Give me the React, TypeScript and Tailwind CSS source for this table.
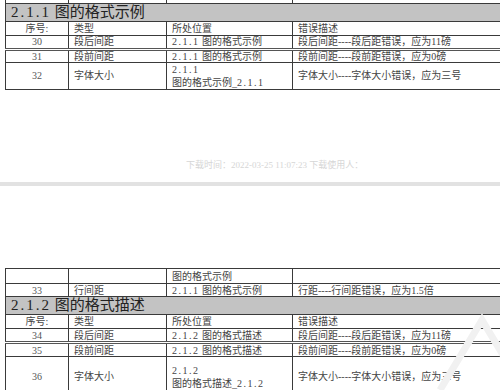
const font = "font-['Liberation_Serif','Noto_Sans_CJK_SC',serif]";

type Row = { no: string; type: string; loc: string[]; desc: string; dbl?: boolean; h: string };

const cell = "border border-[#3a3a3a] px-[5px] py-0 align-middle";

// numbers in the source font are set wide, so open them up a little
const Num = ({ t }: { t: string }) => <span className="tracking-[1.5px]">{t}</span>;

const Heading = ({ no, text }: { no: string; text: string }) => (
  <tr className="h-[18px]">
    <td colSpan={4} className="border border-[#3a3a3a] bg-[#c3c3c3] px-[5px] py-0 text-[15px] leading-[15px] text-[#222]">
      <span className="tracking-[2px]">{no}</span> {text}
    </td>
  </tr>
);

const Header = () => (
  <tr className="h-[14px] text-[10px] leading-[11px] text-[#444]">
    <td className={`${cell} text-center`}>序号:</td>
    <td className={cell}>类型</td>
    <td className={cell}>所处位置</td>
    <td className={cell}>错误描述</td>
  </tr>
);

const Loc = ({ l }: { l: string }) => {
  const m = l.match(/^([\d.]+)$/);
  if (m) return <Num t={m[1]} />;
  const u = l.match(/^(.*_)([\d.]+)$/);
  if (u)
    return (
      <>
        {u[1]}
        <Num t={u[2]} />
      </>
    );
  const s = l.split(" ");
  return (
    <>
      <Num t={s[0]} /> {s[1]}
    </>
  );
};

const DataRow = ({ r }: { r: Row }) => {
  const b = r.dbl ? "border-b-[3px] border-b-[#555] border-double" : "";
  return (
    <tr className={`${r.h} text-[10px] leading-[11px] text-[#444]`}>
      <td className={`${cell} ${b} text-center text-[#555]`}>{r.no}</td>
      <td className={`${cell} ${b}`}>{r.type}</td>
      <td className={`${cell} ${b}`}>
        {r.loc.map((l, i) => (
          <div key={i} className={r.loc.length > 1 ? "leading-[13px]" : ""}>
            <Loc l={l} />
          </div>
        ))}
      </td>
      <td className={`${cell} ${b}`}>{r.desc}</td>
    </tr>
  );
};

const Cols = () => (
  <colgroup>
    <col className="w-[63px]" />
    <col className="w-[98px]" />
    <col className="w-[126px]" />
    <col className="w-[230px]" />
  </colgroup>
);

export default function App() {
  const rows1: Row[] = [
    { no: "30", type: "段后间距", loc: ["2.1.1 图的格式示例"], desc: "段后间距----段后距错误，应为11磅", dbl: true, h: "h-[14px]" },
    { no: "31", type: "段前间距", loc: ["2.1.1 图的格式示例"], desc: "段前间距----段前距错误，应为0磅", h: "h-[13px]" },
    { no: "32", type: "字体大小", loc: ["2.1.1", "图的格式示例_2.1.1"], desc: "字体大小----字体大小错误，应为三号", h: "h-[27px]" },
  ];
  const rows2: Row[] = [
    { no: "34", type: "段后间距", loc: ["2.1.2 图的格式描述"], desc: "段后间距----段后距错误，应为11磅", dbl: true, h: "h-[14px]" },
    { no: "35", type: "段前间距", loc: ["2.1.2 图的格式描述"], desc: "段前间距----段前距错误，应为0磅", h: "h-[14px]" },
    { no: "36", type: "字体大小", loc: ["2.1.2", "图的格式描述_2.1.2"], desc: "字体大小----字体大小错误，应为三号", h: "h-[40px]" },
  ];

  return (
    <div className={`relative h-[390px] w-[500px] overflow-hidden bg-white ${font}`}>
      {/* page 1 */}
      <div className="relative h-[182px]">
        <table className="ml-[5px] w-[517px] table-fixed border-collapse">
          <Cols />
          <tbody>
            <tr className="h-[3px]">
              <td className="border-x border-b border-[#3a3a3a] p-0" />
              <td className="border-x border-b border-[#3a3a3a] p-0" />
              <td className="border-x border-b border-[#3a3a3a] p-0" />
              <td className="border-x border-b border-[#3a3a3a] p-0" />
            </tr>
            <Heading no="2.1.1" text="图的格式示例" />
            <Header />
            {rows1.map((r) => (
              <DataRow key={r.no} r={r} />
            ))}
          </tbody>
        </table>
        <div className="mt-[70px] pl-[186px] text-[9px] leading-[10px] text-[#d6d6d6]">
          下载时间：2022-03-25 11:07:23 下载使用人：
        </div>
      </div>

      <div className="h-[4px] bg-[#e2e2e2]" />

      {/* page 2 */}
      <div className="pt-[82px]">
        <table className="ml-[5px] w-[517px] table-fixed border-collapse">
          <Cols />
          <tbody>
            <tr className="h-[15px] text-[10px] leading-[11px] text-[#444]">
              <td className={cell} />
              <td className={cell} />
              <td className={cell}>图的格式示例</td>
              <td className={cell} />
            </tr>
            <tr className="h-[13px] text-[10px] leading-[11px] text-[#444]">
              <td className={`${cell} text-center text-[#555]`}>33</td>
              <td className={cell}>行间距</td>
              <td className={cell}>
                <Num t="2.1.1" /> 图的格式示例
              </td>
              <td className={cell}>行距----行间距错误，应为1.5倍</td>
            </tr>
            <Heading no="2.1.2" text="图的格式描述" />
            <Header />
            {rows2.map((r) => (
              <DataRow key={r.no} r={r} />
            ))}
          </tbody>
        </table>
      </div>

      {/* faint watermark corner */}
      <svg className="absolute bottom-0 right-0" width="80" height="80" viewBox="0 0 80 80">
        <path d="M20 80 L62 10 L104 80" fill="none" stroke="#f1f1f1" strokeWidth="7" />
      </svg>
    </div>
  );
}
